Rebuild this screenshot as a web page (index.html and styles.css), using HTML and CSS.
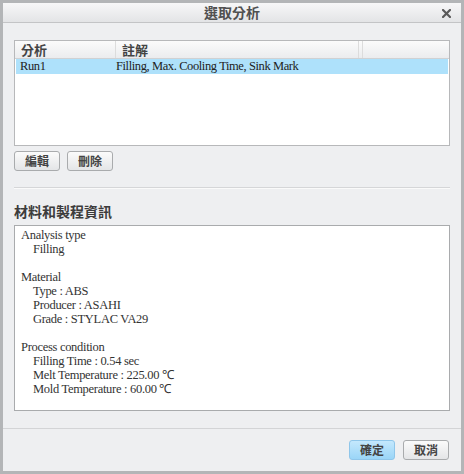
FILE: index.html
```html
<!DOCTYPE html>
<html lang="zh-Hant">
<head>
<meta charset="utf-8">
<link rel="stylesheet" href="styles.css">
</head>
<body>
<div class="window">
  <div class="titlebar">
    <span class="title">選取分析</span>
    <svg class="close" width="9" height="9" viewBox="0 0 9 9"><path d="M1 1 L8 8 M8 1 L1 8" stroke="#5a5a5a" stroke-width="2.2" stroke-linecap="square"/></svg>
  </div>
  <div class="content">
    <div class="list">
      <div class="list-head">
        <div class="col c1">分析</div>
        <div class="col c2">註解</div>
        <div class="col c3"></div>
      </div>
      <div class="row selected">
        <div class="cell c1">Run1</div>
        <div class="cell c2">Filling, Max. Cooling Time, Sink Mark</div>
      </div>
    </div>
    <div class="actions">
      <button class="btn">編輯</button>
      <button class="btn">刪除</button>
    </div>
    <div class="sep"></div>
    <div class="heading">材料和製程資訊</div>
    <div class="info">
      <div class="line">Analysis type</div>
      <div class="line ind">Filling</div>
      <div class="line blank"></div>
      <div class="line">Material</div>
      <div class="line ind">Type : ABS</div>
      <div class="line ind">Producer : ASAHI</div>
      <div class="line ind">Grade : STYLAC VA29</div>
      <div class="line blank"></div>
      <div class="line">Process condition</div>
      <div class="line ind">Filling Time : 0.54 sec</div>
      <div class="line ind">Melt Temperature : 225.00 ℃</div>
      <div class="line ind">Mold Temperature : 60.00 ℃</div>
    </div>
  </div>
  <div class="footer">
    <button class="btn primary">確定</button>
    <button class="btn">取消</button>
  </div>
</div>
</body>
</html>
```
FILE: styles.css
```css
html, body {
  margin: 0;
  padding: 0;
  background: #eeeff1;
}
.window {
  width: 464px;
  height: 474px;
  box-sizing: border-box;
  border: 3px solid #b3b5b7;
  background: #eeeff1;
  display: flex;
  flex-direction: column;
  font-family: "Noto Sans CJK TC", "Noto Sans", sans-serif;
}
.titlebar {
  height: 19px;
  border-bottom: 1px solid #c3c4c6;
  background: linear-gradient(#f7f7f8, #e3e4e6);
  display: flex;
  align-items: center;
  justify-content: center;
  position: relative;
}
.title {
  font-weight: bold;
  font-size: 14px;
  color: #505050;
  line-height: 19px;
}
.close {
  position: absolute;
  right: 10px;
  top: 6px;
}
.content {
  padding: 0 11px;
  display: flex;
  flex-direction: column;
}
.list {
  margin-top: 17px;
  height: 106px;
  box-sizing: border-box;
  border: 1px solid #b7b8ba;
  background: #fff;
}
.list-head {
  display: flex;
  height: 18px;
  box-sizing: border-box;
  border-bottom: 1px solid #d0d1d3;
  background: linear-gradient(#fbfbfb, #ebecee);
}
.col {
  font-weight: bold;
  font-size: 13px;
  color: #444;
  line-height: 17px;
  box-sizing: border-box;
  padding-left: 6px;
}
.list-head .c1 { width: 101px; border-right: 1px solid #dcdcdc; }
.list-head .c2 { width: 243px; border-right: 1px solid #dcdcdc; padding-left: 6px; }
.list-head .c3 { width: 4px; border-right: 1px solid #dcdcdc; padding: 0; }
.row {
  display: flex;
  height: 15px;
  margin: 0 1px;
  font-family: "Liberation Serif", serif;
  font-size: 12.5px;
  letter-spacing: -0.4px;
  line-height: 15px;
  color: #222;
  white-space: nowrap;
}
.row.selected { background: #aee1fb; }
.row .c1 { width: 100px; padding-left: 4px; box-sizing: border-box; }
.row .c2 { padding-left: 0; }
.actions {
  display: flex;
  gap: 7px;
  margin-top: 5px;
}
.btn {
  height: 20px;
  width: 46px;
  box-sizing: border-box;
  padding: 0;
  border: 1px solid #a9abad;
  border-radius: 3px;
  background: linear-gradient(#fbfbfb, #e4e5e7);
  font-family: "Noto Sans CJK TC", sans-serif;
  font-weight: bold;
  font-size: 12px;
  color: #444;
  line-height: 18px;
}
.sep {
  margin-top: 16px;
  height: 1px;
  background: #d5d6d8;
  border-bottom: 1px solid #fafafa;
}
.heading {
  margin-top: 11px;
  font-weight: bold;
  font-size: 14px;
  line-height: 22px;
  color: #3c3c3c;
}
.info {
  margin-top: 3px;
  height: 186px;
  box-sizing: border-box;
  border: 1px solid #a9abad;
  background: #fff;
  padding: 2px 0 0 6px;
  font-family: "Liberation Serif", serif;
  font-size: 12.5px;
  letter-spacing: -0.3px;
  color: #333;
}
.line {
  height: 14px;
  line-height: 14px;
  white-space: nowrap;
}
.line.ind { padding-left: 12px; }
.footer {
  margin-top: 17px;
  border-top: 1px solid #d3d4d6;
  flex: 1;
  display: flex;
  justify-content: flex-end;
  align-items: flex-start;
  gap: 8px;
  padding: 11px 12px 0 0;
  background: #eeeff1;
}
.btn.primary {
  border-color: #8fc6ea;
  background: linear-gradient(#c4e8fd, #9ad5f7);
}
```
